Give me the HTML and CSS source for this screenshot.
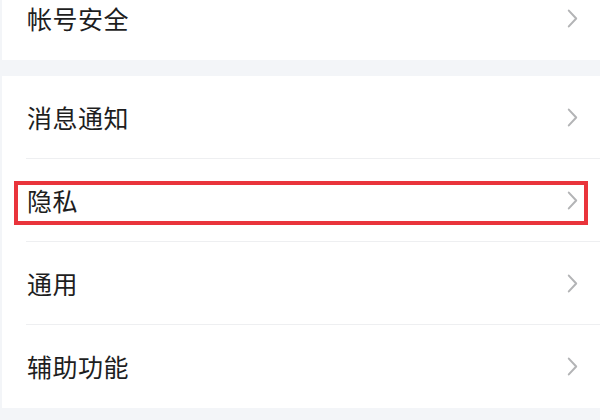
FILE: index.html
```html
<!DOCTYPE html>
<html lang="zh-CN">
<head>
<meta charset="utf-8">
<link rel="stylesheet" href="styles.css">
</head>
<body>
<div class="page">
  <section class="group group-top">
    <div class="row row-first">
      <span class="label">帐号安全</span>
      <svg class="chev" viewBox="0 0 10 18"><path d="M1.5 1.5 L8.5 9 L1.5 16.5"/></svg>
    </div>
  </section>
  <div class="gap"></div>
  <section class="group">
    <div class="row">
      <span class="label">消息通知</span>
      <svg class="chev" viewBox="0 0 10 18"><path d="M1.5 1.5 L8.5 9 L1.5 16.5"/></svg>
    </div>
    <div class="row highlighted">
      <span class="label">隐私</span>
      <svg class="chev" viewBox="0 0 10 18"><path d="M1.5 1.5 L8.5 9 L1.5 16.5"/></svg>
      <div class="mark"></div>
    </div>
    <div class="row">
      <span class="label">通用</span>
      <svg class="chev" viewBox="0 0 10 18"><path d="M1.5 1.5 L8.5 9 L1.5 16.5"/></svg>
    </div>
    <div class="row row-last">
      <span class="label">辅助功能</span>
      <svg class="chev" viewBox="0 0 10 18"><path d="M1.5 1.5 L8.5 9 L1.5 16.5"/></svg>
    </div>
  </section>
  <div class="gap gap-bottom"></div>
</div>
</body>
</html>
```

FILE: styles.css
```css
html, body {
  margin: 0;
  padding: 0;
}
body {
  width: 600px;
  height: 420px;
  overflow: hidden;
  background: #f3f5f8;
  font-family: "Noto Sans CJK SC", "Noto Sans", sans-serif;
}
.page {
  display: flex;
  flex-direction: column;
  padding-left: 2px;
}
.group {
  background: #ffffff;
  display: flex;
  flex-direction: column;
}
.gap {
  height: 16px;
  background: #f3f5f8;
}
.gap-bottom {
  height: 12px;
}
.row {
  position: relative;
  height: 83px;
  box-sizing: border-box;
  display: flex;
  align-items: center;
  justify-content: space-between;
  padding: 0 22px 0 25px;
  background: #ffffff;
  background-image: linear-gradient(#eeeff1, #eeeff1);
  background-repeat: no-repeat;
  background-size: calc(100% - 24px) 1px;
  background-position: 24px 100%;
}
.row-first {
  height: 60px;
  padding-bottom: 24px;
  background-image: none;
}
.row-last {
  background-image: none;
}
.label {
  font-size: 25px;
  color: #1e1e1e;
  letter-spacing: 0.5px;
  line-height: 1;
}
.chev {
  width: 11px;
  height: 19px;
  fill: none;
  stroke: #b3b4b6;
  stroke-width: 1.9;
  stroke-linecap: round;
  stroke-linejoin: round;
}
.mark {
  position: absolute;
  left: 12px;
  top: 22px;
  width: 574px;
  height: 44px;
  box-sizing: border-box;
  border: 4px solid #e9343b;
}
```
